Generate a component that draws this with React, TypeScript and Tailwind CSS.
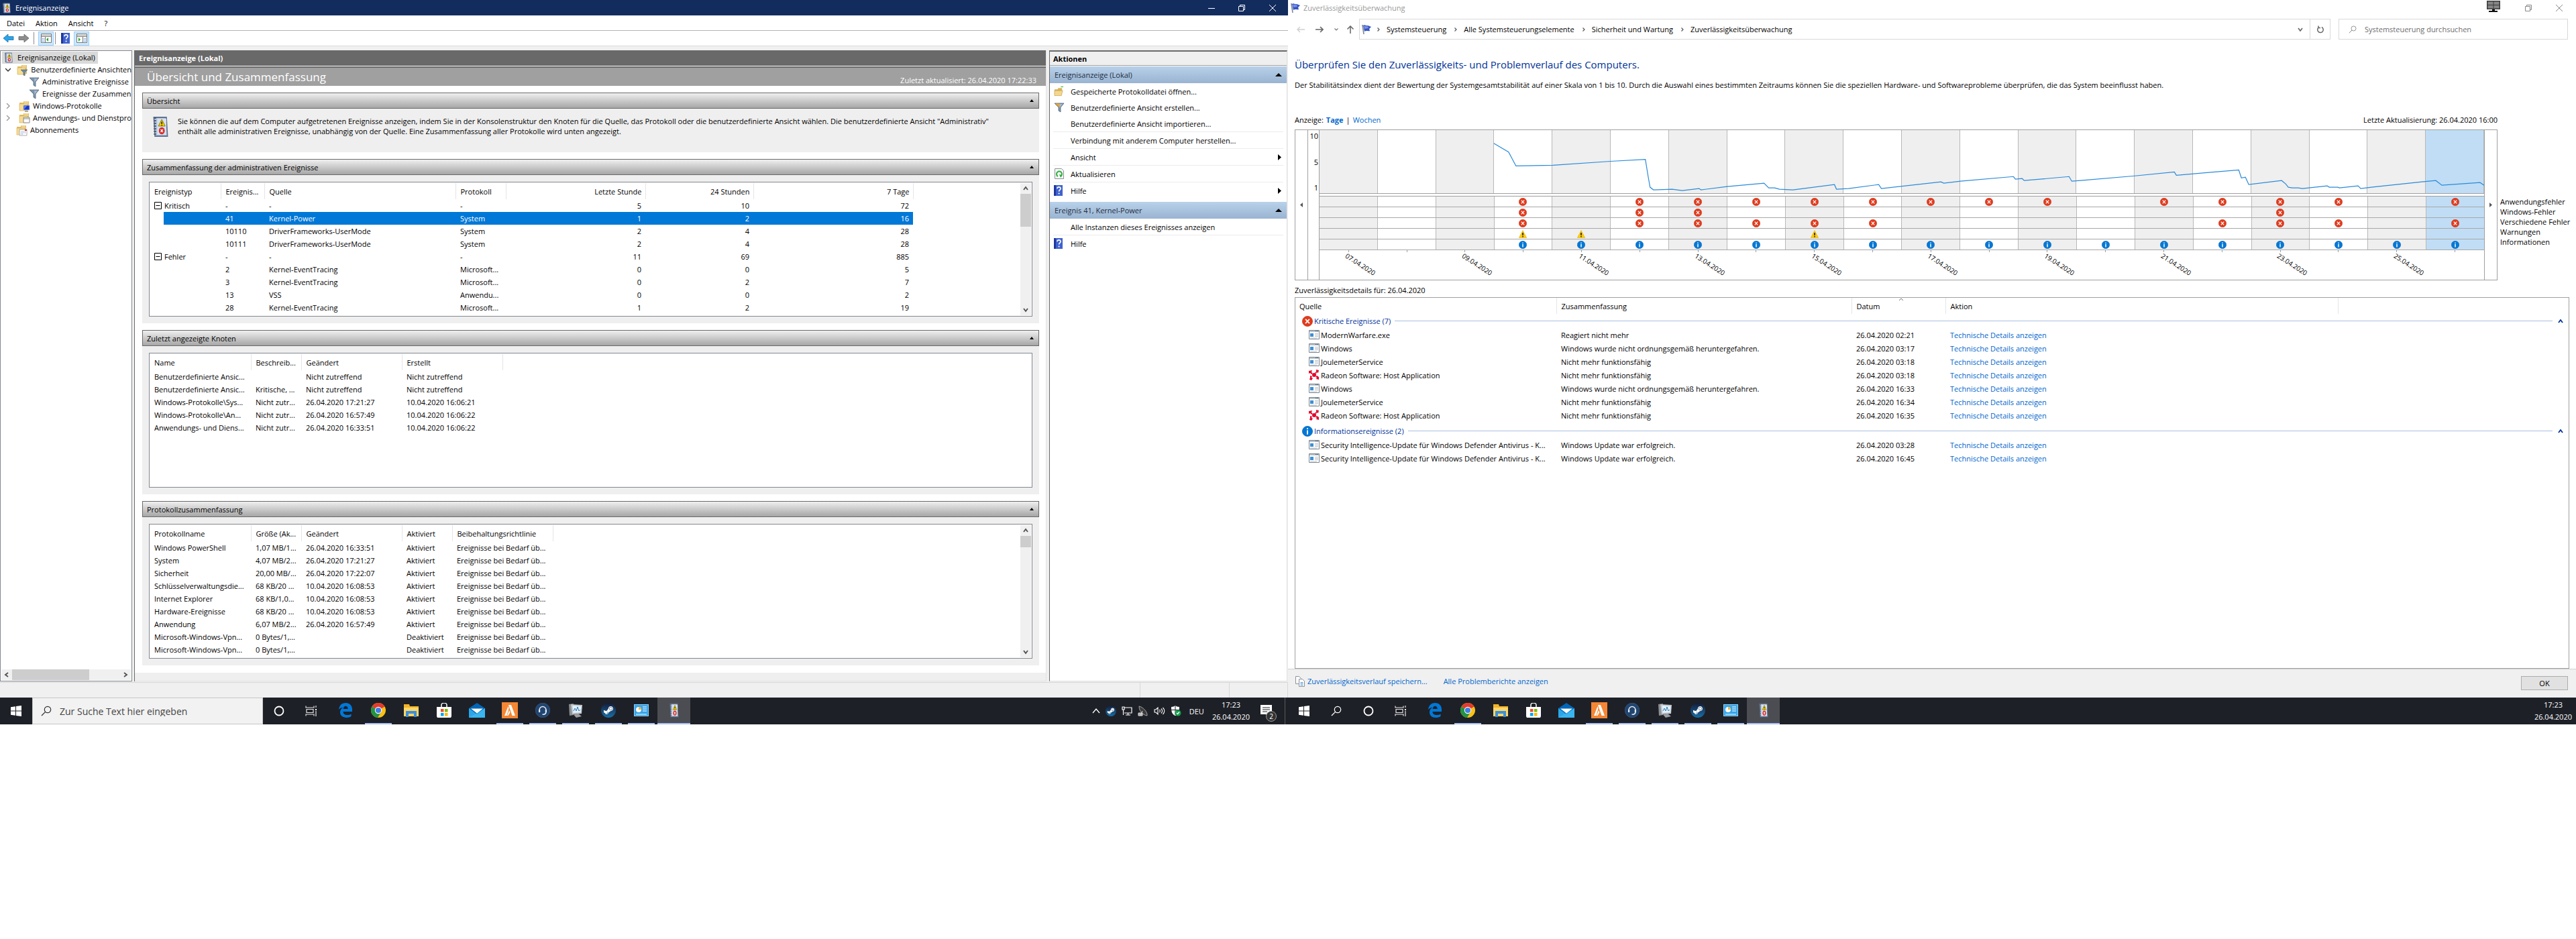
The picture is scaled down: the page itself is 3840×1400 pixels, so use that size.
import { useState } from 'react';
import type { ReactNode } from 'react';
import { FaSteamSymbol } from 'react-icons/fa';

type IconProps = { className?: string };

function EventIcon({ className = 'w-4 h-4' }: IconProps) {
  return (
    <svg viewBox="0 0 16 16" preserveAspectRatio="none" className={className}>
      <path d="M2 1h11l1 14H3z" fill="#b4c6df" stroke="#61738f" strokeWidth="1" />
      <path d="M5 2h8v12H5z" fill="#d5e1f0" />
      <path d="M3 1v14" stroke="#4f5b6e" strokeWidth="2" strokeDasharray="1 1" />
      <path d="M9 2.500l3 5H6z" fill="#f5d000" stroke="#8a7300" strokeWidth=".5" />
      <path d="M9 4.200v1.800M9 6.500v.6" stroke="#000" strokeWidth=".8" />
      <circle cx="9" cy="11" r="2.600" fill="#d92b2b" />
      <path d="M8 10l2 2M10 10l-2 2" stroke="#fff" strokeWidth=".8" />
    </svg>
  );
}

function FunnelIcon({ className = 'w-4 h-4', tint = '#7c95ad' }: IconProps & { tint?: string }) {
  return (
    <svg viewBox="0 0 16 16" className={className}>
      <path d="M1 2h14l-5 6v7l-3-2V8z" fill="#7c95ad" stroke="#4e6579" strokeWidth=".8" />
      <path d="M2 2.500h6v5.500z" fill={tint} />
      <path d="M8 3h5l-4 5v4" fill="#c6d6e4" opacity=".6" />
    </svg>
  );
}

function FolderIcon({ kind }: { kind: string }) {
  return (
    <svg viewBox="0 0 17 17" className="w-[17px] h-[17px] shrink-0">
      <path d="M1 3h6V1h8v13H1z" fill="#e3bd62" />
      <path d="M1 5h12v10H1z" fill="#f7dd92" stroke="#d3aa4c" strokeWidth=".6" />
      <path d="M8 2h6M8 4h6" stroke="#fff3cd" strokeWidth=".8" />
      {kind === 'filter' && <path d="M6 8h10l-4 4v5l-2-1v-4z" fill="#6f8ba5" stroke="#47617a" strokeWidth=".6" />}
      {kind === 'monitor' && (
        <g>
          <path d="M7 7h9v7H7z" fill="#1436c9" stroke="#c8c8c8" strokeWidth=".8" />
          <path d="M9 16h5" stroke="#777" strokeWidth="1.200" />
          <path d="M8 8l4 0-4 5z" fill="#5b80f0" />
        </g>
      )}
      {kind === 'window' && <path d="M7 7h9v8H7zM7 9h9" fill="#fff" stroke="#888" strokeWidth="1" />}
      {kind === 'calendar' && (
        <g>
          <path d="M5 7h11v9H5z" fill="#fff" stroke="#999" strokeWidth=".8" />
          <path d="M7 10h7M7 12h7M7 14h4" stroke="#6d8fc4" strokeDasharray="1 1" />
          <path d="M13 7h3v2h-3z" fill="#d33" />
        </g>
      )}
    </svg>
  );
}

function HelpIcon({ className = 'w-[13px] h-4' }: IconProps) {
  return (
    <svg viewBox="0 0 13 16" className={className}>
      <path d="M0 0h13v16H0z" fill="#3f62cf" />
      <path d="M0 0h3v16H0z" fill="#20389c" />
      <path d="M5 5.200c0-3 5-3 5 0 0 2-2.400 2-2.400 4.300" fill="none" stroke="#fff" strokeWidth="1.700" />
      <circle cx="7.600" cy="12.500" r="1.100" fill="#fff" />
    </svg>
  );
}

function FlagIcon() {
  return (
    <svg viewBox="0 0 16 16" className="w-4 h-4 shrink-0">
      <path d="M2 1l2 14" stroke="#7a8496" strokeWidth="1.600" />
      <path d="M3 2c3-2 4 1 7 0l5 2-3 3 1 3c-3 1-5-1-8 1z" fill="#3555c4" />
      <path d="M4 3c3-1 4 1 6 0l1 3-6 1z" fill="#7690e6" />
    </svg>
  );
}

function ErrorIcon({ className = 'w-3 h-3' }: IconProps) {
  return (
    <svg viewBox="0 0 12 12" className={className}>
      <circle cx="6" cy="6" r="5.700" fill="#e43a1c" stroke="#b92c12" strokeWidth=".5" />
      <path d="M3.800 3.600l4.400 4.800M8.200 3.600L3.800 8.400" stroke="#fff" strokeWidth="1.300" />
    </svg>
  );
}

function InfoIcon({ className = 'w-3 h-3' }: IconProps) {
  return (
    <svg viewBox="0 0 12 12" className={className}>
      <circle cx="6" cy="6" r="5.700" fill="#0078d7" stroke="#005ba8" strokeWidth=".5" />
      <path d="M6 2.400v1.400M6 4.800v4.800" stroke="#fff" strokeWidth="1.500" />
    </svg>
  );
}

function WarnIcon() {
  return (
    <svg viewBox="0 0 12 12" className="w-3 h-3">
      <path d="M6 .5l5.700 11H.3z" fill="#ffcc0a" stroke="#d9a400" strokeWidth=".5" />
      <path d="M6 4v4M6 9v1.500" stroke="#000" strokeWidth="1.400" />
    </svg>
  );
}

function AppIcon() {
  return (
    <svg viewBox="0 0 16 14" className="w-4 h-3.5 shrink-0">
      <path d="M.5 .5h15v13H.5z" fill="#fff" stroke="#7d8791" />
      <path d="M1 1h14v2H1z" fill="#b9c3cc" />
      <path d="M10 1.500h4" stroke="#4b5d6e" strokeDasharray="1 .6" />
      <path d="M2 5h5v5H2z" fill="#3f8fd4" />
      <path d="M9 5.500h5M9 7.500h5M9 9.500h5M2 12h10" stroke="#a9b4bd" strokeWidth=".8" />
    </svg>
  );
}

function RadeonIcon() {
  return (
    <svg viewBox="0 0 16 16" className="w-4 h-4 shrink-0" fill="#e2062c">
      <circle cx="8" cy="8" r="3" />
      <path d="M0 2l5-1-1 3 2 2-2 1-2-2-2 1zM11 0l4 1-1 4-2-1-1 2-2-1 2-2zM2 9l3 1-1 2 2 1-2 3-3-1 1-3zM12 9l3 2v4l-4-1 1-2-2-1z" />
    </svg>
  );
}

function WinLogo() {
  return (
    <svg viewBox="0 0 16 16" className="w-4 h-4" fill="#fff">
      <path d="M0 2.200l7-1v6.300H0zM8 1l8-1v7.500H8zM0 8.500h7v6.300l-7-1zM8 8.500h8V16l-8-1.100z" />
    </svg>
  );
}

function SearchGlyph({ className = 'w-4 h-4' }: IconProps) {
  return (
    <svg viewBox="0 0 16 16" className={className} fill="none" stroke="currentColor">
      <circle cx="10" cy="6" r="4.700" strokeWidth="1.200" />
      <path d="M6.600 9.400L1 15" strokeWidth="1.300" />
    </svg>
  );
}

function CortanaIcon() {
  return (
    <svg viewBox="0 0 16 16" className="w-4 h-4">
      <circle cx="8" cy="8" r="6.500" fill="none" stroke="#fff" strokeWidth="1.800" />
    </svg>
  );
}

function TaskViewIcon() {
  return (
    <svg viewBox="0 0 18 16" className="w-[18px] h-4" fill="none" stroke="#e4e4e4">
      <path d="M1 .5V3h12V.5M1 15.500V13h12v2.500M2 5.500h10v5H2zM16 0v3M16 13v3M16 8v5" strokeWidth="1.200" />
      <path d="M15 5h2v2h-2z" fill="#fff" stroke="none" />
    </svg>
  );
}

function EdgeIcon() {
  return (
    <svg viewBox="0 0 20 22" className="w-5 h-[22px]">
      <path d="M0 10C1 3 5 0 10.500 0 16 0 20 4 20 9.500V13H6.500c0 3.500 2.500 5 6 5 2.500 0 4.500-.7 6-1.600V20c-1.500 1.200-4 2-7 2C5.500 22 2 18.500 2 14c0-3.500 2-6 4.500-7.300C3.500 7 1.500 8 0 10zM6.700 9h7c0-2.600-1.200-4.200-3.400-4.200C8.200 4.800 7 6.500 6.700 9z" fill="#0078d7" />
    </svg>
  );
}

function ChromeIcon() {
  return (
    <svg viewBox="0 0 22 22" className="w-[22px] h-[22px]">
      <circle cx="11" cy="11" r="11" fill="#fbc116" />
      <path d="M11 11L1.500 5.500A11 11 0 0 1 20.500 5.500z" fill="#e33b2e" />
      <path d="M1.500 5.500A11 11 0 0 0 10 22l5.500-9L11 11z" fill="#229342" />
      <path d="M11 6h9.800l-.3-.6z" fill="#e33b2e" />
      <circle cx="11" cy="11" r="5.200" fill="#fff" />
      <circle cx="11" cy="11" r="4.100" fill="#3f7ee8" />
    </svg>
  );
}

function ExplorerIcon() {
  return (
    <svg viewBox="0 0 22 19" className="w-[22px] h-[19px]">
      <path d="M0 0h8l1 3h13v15H0z" fill="#f0b429" />
      <path d="M0 5h22v13H0z" fill="#fcd667" />
      <path d="M3 10h16v9h-4v-5H7v5H3z" fill="#3d8fdc" />
    </svg>
  );
}

function StoreIcon() {
  return (
    <svg viewBox="0 0 22 22" className="w-[22px] h-[22px]">
      <path d="M7 6V3a4 3 0 0 1 8 0v3" fill="none" stroke="#fff" strokeWidth="1.500" />
      <path d="M0 6h22v14l-1 2H1l-1-2z" fill="#fff" />
      <path d="M6 9h4.500v4.500H6z" fill="#f25022" />
      <path d="M12 9h4.500v4.500H12z" fill="#7fba00" />
      <path d="M6 15h4.500v4.500H6z" fill="#00a4ef" />
      <path d="M12 15h4.500v4.500H12z" fill="#ffb900" />
    </svg>
  );
}

function MailIcon() {
  return (
    <svg viewBox="0 0 24 22" className="w-6 h-[22px]">
      <path d="M0 8l12-8 12 8v14H0z" fill="#0067b8" />
      <path d="M0 8l12 9L24 8v14H0z" fill="#2aa7ea" />
      <path d="M0 22L24 8v14z" fill="#44c0f5" opacity=".6" />
      <path d="M3 8.500h18l-9 7z" fill="#fff" />
    </svg>
  );
}

function FiveMIcon() {
  return (
    <svg viewBox="0 0 24 24" className="w-6 h-6">
      <path d="M0 0h24v24H0z" fill="#f58634" />
      <path d="M10 4h4l6 16h-4.500L11.500 8.500zM9.500 6l1 3L7.500 20H4zM11 12l1.500 3-3 5H8z" fill="#fff" />
    </svg>
  );
}

function TeamSpeakIcon() {
  return (
    <svg viewBox="0 0 22 22" className="w-[22px] h-[22px]">
      <circle cx="11" cy="11" r="10.800" fill="#22456f" stroke="#3b6291" strokeWidth=".6" />
      <path d="M6 12V10.500a5 5 0 0 1 10 0V12" fill="none" stroke="#e5edf5" strokeWidth="1.400" />
      <path d="M5 10h2.200v4H5zM14.800 10H17v4h-2.200z" fill="#e5edf5" />
      <path d="M16 14c-.6 2.600-2.600 3.500-5.500 3" fill="none" stroke="#e5edf5" strokeWidth="1.500" />
    </svg>
  );
}

function PerfIcon() {
  return (
    <svg viewBox="0 0 24 22" className="w-6 h-[22px]">
      <path d="M2 2l7-1v17l-6 1z" fill="#8c9095" />
      <path d="M5 2l17 1-1 13-14 1z" fill="#c3c8cc" />
      <path d="M7.500 4l13 1-1 9-11 1z" fill="#e3f0fa" />
      <path d="M9 12l2-4 2 4 2-6 2 6 2-2" fill="none" stroke="#2d7dbb" strokeWidth="1" />
      <path d="M9 17.500l7-1.500 5 4-8 2z" fill="#9b9fa3" />
    </svg>
  );
}

function SteamIcon({ className = 'w-[22px] h-[22px] p-[3px]' }: IconProps) {
  return (
    <span className={`${className} flex items-center justify-center rounded-full bg-linear-to-b from-[#111d3a] to-[#1470a8]`}>
      <FaSteamSymbol className="w-full h-full text-white" />
    </span>
  );
}

function ControlPanelIcon() {
  return (
    <svg viewBox="0 0 22 18" className="w-[22px] h-[18px]">
      <path d="M0 0h22v18H0z" fill="#8fd0f5" />
      <path d="M1 1h20v16H1z" fill="#37a4e8" />
      <circle cx="7" cy="8" r="4" fill="#fff" />
      <path d="M7 8V4a4 4 0 0 1 4 4z" fill="#f7b733" />
      <path d="M13 4h6M13 7h6M13 10h6M3 15h16" stroke="#fff" strokeWidth="1.200" />
    </svg>
  );
}

const taskApps = [
  { name: 'Edge', icon: <EdgeIcon />, open: false },
  { name: 'Chrome', icon: <ChromeIcon />, open: true },
  { name: 'Explorer', icon: <ExplorerIcon />, open: false },
  { name: 'Store', icon: <StoreIcon />, open: false },
  { name: 'Mail', icon: <MailIcon />, open: false },
  { name: 'FiveM', icon: <FiveMIcon />, open: true },
  { name: 'TeamSpeak', icon: <TeamSpeakIcon />, open: true },
  { name: 'Leistung', icon: <PerfIcon />, open: true },
  { name: 'Steam', icon: <SteamIcon />, open: true },
  { name: 'Systemsteuerung', icon: <ControlPanelIcon />, open: true },
];

function TaskApps() {
  return (
    <div className="flex h-full ml-0.5">
      {taskApps.map((app) => (
        <button key={app.name} aria-label={app.name} className="w-[49px] h-full flex flex-col items-center">
          <span className="flex-1 flex items-center justify-center">{app.icon}</span>
          <span className={app.open ? 'w-10 h-0.5 bg-[#a9c0f5]' : 'w-10 h-0.5'} />
        </button>
      ))}
      <button aria-label="Ereignisanzeige" className="w-[49px] h-full flex flex-col items-center bg-[#4b4d52]">
        <span className="flex-1 flex items-center justify-center">
          <EventIcon className="w-4 h-[22px]" />
        </span>
        <span className="w-full h-0.5 bg-[#a9c0f5]" />
      </button>
    </div>
  );
}

function Clock() {
  return (
    <div className="text-[11px] leading-[18px] text-center text-white">
      <div>17:23</div>
      <div>26.04.2020</div>
    </div>
  );
}

function ScrollArrow({ dir }: { dir: 'up' | 'down' | 'left' | 'right' }) {
  const paths = {
    up: 'M1 6l3-4 3 4',
    down: 'M1 2l3 4 3-4',
    left: 'M6 1L2 4l4 3',
    right: 'M2 1l4 3-4 3',
  };
  return (
    <button aria-label={dir} className="w-4 h-4 flex items-center justify-center shrink-0">
      <svg viewBox="0 0 8 8" className="w-2 h-2" fill="none" stroke="#505050" strokeWidth="1.800">
        <path d={paths[dir]} />
      </svg>
    </button>
  );
}

function VScroll({ thumb }: { thumb: string }) {
  return (
    <div className="w-4 m-px flex flex-col bg-[#f0f0f0]">
      <ScrollArrow dir="up" />
      <div className={thumb} />
      <div className="flex-1" />
      <ScrollArrow dir="down" />
    </div>
  );
}

function Section({ title, children }: { title: string; children: ReactNode }) {
  const [open, setOpen] = useState(true);
  return (
    <section className="bg-[#efefef]">
      <button
        onClick={() => setOpen(!open)}
        className="w-full h-6 flex items-center justify-between pl-1.5 pr-[7px] border border-[#696969] bg-linear-to-b from-[#f0f0f0] to-[#a6a6a6]"
      >
        <span>{title}</span>
        <svg viewBox="0 0 6 4" className="w-1.5 h-1">
          <path d="M0 4l3-4 3 4z" />
        </svg>
      </button>
      {open && children}
    </section>
  );
}

function ListBox({ children, thumb }: { children: ReactNode; thumb?: string }) {
  return (
    <div className="p-2.5">
      <div className="h-[201px] flex border border-[#828790] bg-white overflow-hidden">
        <div className="flex-1 pt-px">{children}</div>
        {thumb && <VScroll thumb={thumb} />}
      </div>
    </div>
  );
}

type Column = { label: string; width: string; right?: boolean };

function HeadRow({ columns }: { columns: Column[] }) {
  return (
    <thead>
      <tr className="h-6">
        {columns.map((c) => (
          <th
            key={c.label}
            className={`${c.width} ${c.right ? 'text-right pr-[5px]' : 'text-left pl-[7px]'} font-normal border-r border-[#e5e5e5]`}
          >
            {c.label}
          </th>
        ))}
      </tr>
    </thead>
  );
}

const adminColumns: Column[] = [
  { label: 'Ereignistyp', width: 'w-[106px]' },
  { label: 'Ereignis...', width: 'w-[65px]' },
  { label: 'Quelle', width: 'w-[285px]' },
  { label: 'Protokoll', width: 'w-[75px]' },
  { label: 'Letzte Stunde', width: 'w-[208px]', right: true },
  { label: '24 Stunden', width: 'w-[161px]', right: true },
  { label: '7 Tage', width: 'w-[238px]', right: true },
];

const adminRows = [
  ['Kritisch', '-', '-', '-', '5', '10', '72'],
  ['', '41', 'Kernel-Power', 'System', '1', '2', '16'],
  ['', '10110', 'DriverFrameworks-UserMode', 'System', '2', '4', '28'],
  ['', '10111', 'DriverFrameworks-UserMode', 'System', '2', '4', '28'],
  ['Fehler', '-', '-', '-', '11', '69', '885'],
  ['', '2', 'Kernel-EventTracing', 'Microsoft...', '0', '0', '5'],
  ['', '3', 'Kernel-EventTracing', 'Microsoft...', '0', '2', '7'],
  ['', '13', 'VSS', 'Anwendu...', '0', '0', '2'],
  ['', '28', 'Kernel-EventTracing', 'Microsoft...', '1', '2', '19'],
];

function AdminTable() {
  const [selected, setSelected] = useState(1);
  return (
    <table className="table-fixed w-[1138px] whitespace-nowrap">
      <HeadRow columns={adminColumns} />
      <tbody>
        {adminRows.map((row, i) => {
          const bg = i === selected ? 'bg-[#0078d7] text-white' : '';
          return (
            <tr key={i} onClick={() => setSelected(i)} className="h-[19px]">
              <td className="p-0">
                {row[0] ? (
                  <span className="flex items-center gap-1 pl-[7px]">
                    <svg viewBox="0 0 11 11" className="w-[11px] h-[11px]" fill="#fff" stroke="#000">
                      <path d="M.5 .5h10v10H.5zM2.500 5.500h6" />
                    </svg>
                    {row[0]}
                  </span>
                ) : (
                  <span className={`${bg} block h-[19px] ml-[21px]`} />
                )}
              </td>
              {row.slice(1).map((cell, j) => (
                <td key={j} className={`${bg} p-0 ${j < 3 ? 'pl-[7px]' : 'text-right pr-1.5'}`}>
                  {cell}
                </td>
              ))}
            </tr>
          );
        })}
      </tbody>
    </table>
  );
}

function PlainTable({ columns, rows, width }: { columns: Column[]; rows: string[][]; width: string }) {
  return (
    <table className={`table-fixed ${width} whitespace-nowrap`}>
      <HeadRow columns={columns} />
      <tbody>
        {rows.map((row, i) => (
          <tr key={i} className="h-[19px]">
            {row.map((cell, j) => (
              <td key={j} className="p-0 pl-[7px]">
                {cell}
              </td>
            ))}
          </tr>
        ))}
      </tbody>
    </table>
  );
}

const nodeColumns: Column[] = [
  { label: 'Name', width: 'w-[151px]' },
  { label: 'Beschreib...', width: 'w-[75px]' },
  { label: 'Geändert', width: 'w-[150px]' },
  { label: 'Erstellt', width: 'w-[150px]' },
];

const nodeRows = [
  ['Benutzerdefinierte Ansic...', '', 'Nicht zutreffend', 'Nicht zutreffend'],
  ['Benutzerdefinierte Ansic...', 'Kritische, ...', 'Nicht zutreffend', 'Nicht zutreffend'],
  ['Windows-Protokolle\\Sys...', 'Nicht zutr...', '26.04.2020 17:21:27', '10.04.2020 16:06:21'],
  ['Windows-Protokolle\\An...', 'Nicht zutr...', '26.04.2020 16:57:49', '10.04.2020 16:06:22'],
  ['Anwendungs- und Diens...', 'Nicht zutr...', '26.04.2020 16:33:51', '10.04.2020 16:06:22'],
];

const logColumns: Column[] = [
  { label: 'Protokollname', width: 'w-[151px]' },
  { label: 'Größe (Ak...', width: 'w-[75px]' },
  { label: 'Geändert', width: 'w-[150px]' },
  { label: 'Aktiviert', width: 'w-[75px]' },
  { label: 'Beibehaltungsrichtlinie', width: 'w-[150px]' },
];

const logRows = [
  ['Windows PowerShell', '1,07 MB/1...', '26.04.2020 16:33:51', 'Aktiviert', 'Ereignisse bei Bedarf üb...'],
  ['System', '4,07 MB/2...', '26.04.2020 17:21:27', 'Aktiviert', 'Ereignisse bei Bedarf üb...'],
  ['Sicherheit', '20,00 MB/...', '26.04.2020 17:22:07', 'Aktiviert', 'Ereignisse bei Bedarf üb...'],
  ['Schlüsselverwaltungsdie...', '68 KB/20 ...', '10.04.2020 16:08:53', 'Aktiviert', 'Ereignisse bei Bedarf üb...'],
  ['Internet Explorer', '68 KB/1,0...', '10.04.2020 16:08:53', 'Aktiviert', 'Ereignisse bei Bedarf üb...'],
  ['Hardware-Ereignisse', '68 KB/20 ...', '10.04.2020 16:08:53', 'Aktiviert', 'Ereignisse bei Bedarf üb...'],
  ['Anwendung', '6,07 MB/2...', '26.04.2020 16:57:49', 'Aktiviert', 'Ereignisse bei Bedarf üb...'],
  ['Microsoft-Windows-Vpn...', '0 Bytes/1,...', '', 'Deaktiviert', 'Ereignisse bei Bedarf üb...'],
  ['Microsoft-Windows-Vpn...', '0 Bytes/1,...', '', 'Deaktiviert', 'Ereignisse bei Bedarf üb...'],
];

function TreeChevron({ open }: { open?: boolean }) {
  return (
    <svg viewBox="0 0 8 8" className="w-2 h-2 shrink-0" fill="none" stroke={open ? '#333' : '#999'} strokeWidth="1.400">
      <path d={open ? 'M0 2l4 4 4-4' : 'M2 0l4 4-4 4'} />
    </svg>
  );
}

function TreePanel() {
  return (
    <div className="w-[197px] flex flex-col border border-[#828790] bg-white overflow-hidden">
      <ul className="flex-1 pt-px leading-[18px] whitespace-nowrap">
        <li className="flex">
          <span className="flex items-center gap-1.5 h-[18px] ml-0.5 pl-[3px] pr-1 bg-[#d9d9d9]">
            <EventIcon className="w-[14px] h-4" />
            Ereignisanzeige (Lokal)
          </span>
        </li>
        <li className="flex items-center gap-1 h-[18px] pl-[7px]">
          <TreeChevron open />
          <span className="w-1" />
          <FolderIcon kind="filter" />
          Benutzerdefinierte Ansichten
        </li>
        <li className="flex items-center gap-1 h-[18px] pl-[42px]">
          <FunnelIcon className="w-4 h-4 shrink-0" />
          Administrative Ereignisse
        </li>
        <li className="flex items-center gap-1 h-[18px] pl-[42px]">
          <FunnelIcon className="w-4 h-4 shrink-0" />
          Ereignisse der Zusammen
        </li>
        <li className="flex items-center gap-1 h-[18px] pl-[7px]">
          <TreeChevron />
          <span className="w-1" />
          <FolderIcon kind="monitor" />
          Windows-Protokolle
        </li>
        <li className="flex items-center gap-1 h-[18px] pl-[7px]">
          <TreeChevron />
          <span className="w-1" />
          <FolderIcon kind="window" />
          Anwendungs- und Dienstpro
        </li>
        <li className="flex items-center gap-1 h-[18px] pl-[23px]">
          <FolderIcon kind="calendar" />
          Abonnements
        </li>
      </ul>
      <div className="h-4 m-px flex bg-[#f0f0f0]">
        <ScrollArrow dir="left" />
        <div className="w-[115px] bg-[#cdcdcd]" />
        <div className="flex-1" />
        <ScrollArrow dir="right" />
      </div>
    </div>
  );
}

function ActionHeader({ children }: { children: ReactNode }) {
  return (
    <button className="w-full h-[25px] flex items-center justify-between pl-[7px] pr-[7px] text-[#1e2c40] bg-linear-to-b from-[#b9d1ea] to-[#99b4d1]">
      <span>{children}</span>
      <svg viewBox="0 0 10 5" className="w-2.5 h-[5px]">
        <path d="M0 5l5-5 5 5z" fill="#000" />
      </svg>
    </button>
  );
}

function ActionItem({ icon, children, more, line }: { icon?: ReactNode; children: ReactNode; more?: boolean; line?: boolean }) {
  return (
    <li className={`mx-[5px] ${line ? 'border-b border-[#ececec]' : ''}`}>
      <button className="w-full h-6 flex items-center pr-[3px]">
        <span className="w-[26px] flex items-center pl-px">{icon}</span>
        <span className="flex-1 text-left">{children}</span>
        {more && (
          <svg viewBox="0 0 5 9" className="w-[5px] h-[9px]">
            <path d="M0 0l5 4.500L0 9z" />
          </svg>
        )}
      </button>
    </li>
  );
}

function ActionsPanel() {
  return (
    <div className="w-[355px] ml-1 border border-[#e0e0e0] border-l-[#696969] border-t-2 border-t-[#696969] bg-white">
      <h2 className="h-[21px] flex items-center pl-[5px] font-bold bg-[#efefef] border-b border-[#a0a0a0] mb-px">Aktionen</h2>
      <ActionHeader>Ereignisanzeige (Lokal)</ActionHeader>
      <ul className="mb-[5px]">
        <ActionItem
          icon={
            <svg viewBox="0 0 16 16" className="w-[15px] h-4">
              <path d="M1 5h5l1-2h6v4H1z" fill="#d9b45c" />
              <path d="M3 7h11l-2 8H1V7z" fill="#f4d78c" stroke="#b98f3a" strokeWidth=".6" />
              <path d="M11 1h4" stroke="#2fc22f" strokeWidth="1.200" />
            </svg>
          }
        >
          Gespeicherte Protokolldatei öffnen...
        </ActionItem>
        <ActionItem icon={<FunnelIcon className="w-4 h-4" tint="#f7a21b" />}>Benutzerdefinierte Ansicht erstellen...</ActionItem>
        <ActionItem line>Benutzerdefinierte Ansicht importieren...</ActionItem>
        <ActionItem line>Verbindung mit anderem Computer herstellen...</ActionItem>
        <ActionItem line more>
          Ansicht
        </ActionItem>
        <ActionItem
          line
          icon={
            <svg viewBox="0 0 15 16" className="w-[15px] h-4">
              <path d="M1.500 .5h10l3 3v12h-13z" fill="#fafafa" stroke="#8b9196" />
              <path d="M6 12a4 4 0 1 1 4 0" fill="none" stroke="#2fae3c" strokeWidth="2" />
              <path d="M8 9l4 1-2 4z" fill="#2fae3c" />
            </svg>
          }
        >
          Aktualisieren
        </ActionItem>
        <ActionItem more icon={<HelpIcon />}>
          Hilfe
        </ActionItem>
      </ul>
      <ActionHeader>Ereignis 41, Kernel-Power</ActionHeader>
      <ul>
        <ActionItem line>Alle Instanzen dieses Ereignisses anzeigen</ActionItem>
        <ActionItem icon={<HelpIcon />}>Hilfe</ActionItem>
      </ul>
    </div>
  );
}

function EventViewer() {
  return (
    <div className="flex-1 flex flex-col bg-[#f0f0f0]">
      <header className="h-[23px] flex items-center pl-[3px] bg-[#132c5e] text-white">
        <EventIcon className="w-[14px] h-4" />
        <h1 className="flex-1 pl-1.5 text-[11px]">Ereignisanzeige</h1>
        <button aria-label="Minimieren" className="w-[45px] flex justify-center">
          <svg viewBox="0 0 10 10" className="w-2.5 h-2.5" stroke="#fff">
            <path d="M0 5.500h10" />
          </svg>
        </button>
        <button aria-label="Verkleinern" className="w-[45px] flex justify-center">
          <svg viewBox="0 0 10 10" className="w-2.5 h-2.5" fill="none" stroke="#fff">
            <path d="M.5 2.500h7v7h-7zM2.500 2.500v-2h7v7h-2" />
          </svg>
        </button>
        <button aria-label="Schließen" className="w-[47px] flex justify-center">
          <svg viewBox="0 0 10 10" className="w-2.5 h-2.5" stroke="#fff">
            <path d="M0 0l10 10M10 0L0 10" />
          </svg>
        </button>
      </header>
      <nav className="h-[23px] flex items-center gap-4 pl-2.5 bg-white border-b border-[#b3b3b8]">
        <button>Datei</button>
        <button>Aktion</button>
        <button>Ansicht</button>
        <button>?</button>
      </nav>
      <div className="h-[23px] flex items-center pl-1 bg-white border-b border-[#d9d9d9]">
        <button aria-label="Zurück" className="mr-1.5">
          <svg viewBox="0 0 17 14" className="w-[17px] h-3.5">
            <path d="M1 7l7-6v3.500h8v5H8V13z" fill="#2aa5e8" stroke="#1a6ea8" strokeWidth=".8" />
          </svg>
        </button>
        <button aria-label="Vorwärts">
          <svg viewBox="0 0 17 14" className="w-[17px] h-3.5">
            <path d="M16 7L9 1v3.500H1v5h8V13z" fill="#8d8d8d" stroke="#666" strokeWidth=".8" />
          </svg>
        </button>
        <span className="w-px h-[18px] mx-1.5 bg-[#8d8d8d]" />
        <button aria-label="Konsolenstruktur" className="w-[23px] h-[21px] flex items-center justify-center bg-[#cce8ff] border border-[#99d1ff]">
          <svg viewBox="0 0 16 14" className="w-4 h-3.5">
            <path d="M.5 .5h15v13H.5zM.5 4.500h15M6.500 4.500v9" fill="#fff" stroke="#777" />
            <path d="M1 2.500h14" stroke="#999" />
            <path d="M2 7.500h3M2 9.500h3M2 11.500h3" stroke="#3a6fc4" strokeDasharray="1 1" />
            <path d="M11 6v6L8 9z" fill="#27a52c" />
          </svg>
        </button>
        <span className="w-px h-[18px] ml-0.5 mr-2 bg-[#8d8d8d]" />
        <button aria-label="Hilfe" className="mr-1.5">
          <HelpIcon />
        </button>
        <button aria-label="Aktionsbereich" className="w-[23px] h-[21px] flex items-center justify-center bg-[#cce8ff] border border-[#99d1ff]">
          <svg viewBox="0 0 16 14" className="w-4 h-3.5">
            <path d="M.5 .5h15v13H.5zM.5 4.500h15M9.500 4.500v9" fill="#fff" stroke="#777" />
            <path d="M1 2.500h14" stroke="#999" />
            <path d="M11 7.500h3M11 9.500h3M11 11.500h3" stroke="#3a6fc4" strokeDasharray="1 1" />
            <path d="M3 6v6l3-3z" fill="#27a52c" />
          </svg>
        </button>
      </div>
      <div className="flex-1 flex pt-1.5 pr-px pb-px">
        <TreePanel />
        <main className="flex-1 ml-[3px] flex flex-col border-l border-[#696969] border-r border-r-[#e3e3e3] bg-white">
          <h2 className="h-[23px] flex items-center pl-1.5 bg-[#696969] font-bold text-white">Ereignisanzeige (Lokal)</h2>
          <div className="h-[29px] mt-px mb-2.5 flex items-center justify-between pl-[18px] pr-3.5 bg-[#a0a0a0] border-t-2 border-[#696969] text-white">
            <h3 className="text-[17px]">Übersicht und Zusammenfassung</h3>
            <span className="pt-2.5">Zuletzt aktualisiert: 26.04.2020 17:22:33</span>
          </div>
          <div className="flex flex-col gap-2.5 pl-[11px] pr-2.5 pb-[11px]">
            <Section title="Übersicht">
              <div className="h-[65px] flex pl-3.5 pt-[11px] gap-3">
                <EventIcon className="w-[27px] h-8 shrink-0" />
                <p className="flex-1 leading-[15px]">
                  Sie können die auf dem Computer aufgetretenen Ereignisse anzeigen, indem Sie in der Konsolenstruktur den Knoten für die Quelle, das Protokoll oder die benutzerdefinierte Ansicht wählen. Die benutzerdefinierte Ansicht "Administrativ"
                  <br />
                  enthält alle administrativen Ereignisse, unabhängig von der Quelle. Eine Zusammenfassung aller Protokolle wird unten angezeigt.
                </p>
              </div>
            </Section>
            <Section title="Zusammenfassung der administrativen Ereignisse">
              <ListBox thumb="h-[49px] bg-[#cdcdcd]">
                <AdminTable />
              </ListBox>
            </Section>
            <Section title="Zuletzt angezeigte Knoten">
              <ListBox>
                <PlainTable columns={nodeColumns} rows={nodeRows} width="w-[526px]" />
              </ListBox>
            </Section>
            <Section title="Protokollzusammenfassung">
              <ListBox thumb="h-[17px] bg-[#cdcdcd]">
                <PlainTable columns={logColumns} rows={logRows} width="w-[601px]" />
              </ListBox>
            </Section>
          </div>
          <div className="h-[13px] bg-[#efefef] border-b border-[#e3e3e3]" />
        </main>
        <ActionsPanel />
      </div>
      <div className="h-[23px] flex justify-end border-t border-[#d7d7d7]">
        <span className="w-[133px] border-l border-[#d7d7d7]" />
        <span className="w-[88px] border-x border-[#d7d7d7]" />
      </div>
    </div>
  );
}

function LeftTaskbar() {
  return (
    <footer className="h-10 flex items-center bg-[#1e2027] text-white">
      <button aria-label="Start" className="w-12 h-full flex items-center justify-center">
        <WinLogo />
      </button>
      <label htmlFor="taskbar-search" className="w-[344px] h-full flex items-center gap-3 pl-3 bg-[#f2f2f2] border border-[#c6c6c6] text-[#333]">
        <SearchGlyph />
        <input
          id="taskbar-search"
          placeholder="Zur Suche Text hier eingeben"
          className="flex-1 text-[14px] bg-transparent outline-none placeholder:text-[#444]"
        />
      </label>
      <button aria-label="Cortana" className="w-12 flex justify-center">
        <CortanaIcon />
      </button>
      <button aria-label="Aktive Anwendungen" className="w-12 flex justify-center">
        <TaskViewIcon />
      </button>
      <TaskApps />
      <div className="flex-1" />
      <div className="flex items-center gap-2 mr-3">
        <svg viewBox="0 0 12 8" className="w-3 h-2" fill="none" stroke="#fff" strokeWidth="1.300">
          <path d="M1 7l5-6 5 6" />
        </svg>
        <SteamIcon className="w-4 h-4 p-0.5" />
        <svg viewBox="0 0 16 14" className="w-4 h-3.5" fill="none" stroke="#fff" strokeWidth="1.200">
          <path d="M4 2h11v8H4M9.500 10v3M6 13h7M1 1h3v4H1zM2.500 5v8" />
        </svg>
        <svg viewBox="0 0 16 16" className="w-4 h-4">
          <path d="M2 1c0 7 5 13 12 14C15 10 8 2 2 1z" fill="#3c3c3c" stroke="#bbb" strokeWidth=".8" />
          <path d="M7 8L4 15M1 11h6v4H1z" stroke="#ddd" fill="#aaa" />
        </svg>
        <svg viewBox="0 0 17 14" className="w-[17px] h-3.5" fill="none" stroke="#fff" strokeWidth="1.100">
          <path d="M1 5h2l3-3v10L3 9H1zM8.500 5c1 1 1 3 0 4M11 3.500c2 2 2 5 0 7M13.500 2c3 3 3 7 0 10" />
        </svg>
        <svg viewBox="0 0 16 16" className="w-4 h-4">
          <path d="M1 2c3 0 4-1 6-2 2 1 3 2 6 2 0 7-1 11-6 13C2 13 1 9 1 2z" fill="#fff" />
          <path d="M7 0v14M1 6.500h12" stroke="#1e2027" strokeWidth="1" />
          <circle cx="11" cy="11" r="4.500" fill="#12a04a" />
          <path d="M9 11l1.500 1.500L13 9.500" fill="none" stroke="#fff" strokeWidth="1.200" />
        </svg>
        <span className="pl-1">DEU</span>
      </div>
      <Clock />
      <button aria-label="Benachrichtigungen" className="relative w-12 h-full flex items-center justify-center">
        <svg viewBox="0 0 17 18" className="w-[17px] h-[18px]">
          <path d="M0 0h17v14h-5v4l-4-4H0z" fill="#fff" />
          <path d="M3 4h11M3 7h11M3 10h7" stroke="#1e2027" strokeWidth="1.200" />
        </svg>
        <span className="absolute right-2 bottom-1 w-4 h-4 rounded-full bg-[#333] border border-[#999] text-[10px] leading-[14px] text-center">2</span>
      </button>
      <span className="w-px h-full mr-1 ml-1 bg-[#5a5a5a]" />
    </footer>
  );
}

function RightTaskbar() {
  return (
    <footer className="h-10 flex items-center bg-[#1e2027] text-white">
      <button aria-label="Start" className="w-12 h-full flex items-center justify-center">
        <WinLogo />
      </button>
      <button aria-label="Suchen" className="w-12 flex justify-center">
        <SearchGlyph />
      </button>
      <button aria-label="Cortana" className="w-12 flex justify-center">
        <CortanaIcon />
      </button>
      <button aria-label="Aktive Anwendungen" className="w-12 flex justify-center">
        <TaskViewIcon />
      </button>
      <TaskApps />
      <div className="flex-1 flex justify-end pr-1.5">
        <Clock />
      </div>
    </footer>
  );
}

const days = Array.from({ length: 20 }, (_, i) => i);

const markers = [
  { icon: <ErrorIcon />, days: [3, 5, 6, 7, 8, 9, 10, 11, 12, 14, 15, 16, 17, 19] },
  { icon: <ErrorIcon />, days: [3, 5, 6, 16] },
  { icon: <ErrorIcon />, days: [3, 5, 6, 7, 8, 9, 15, 16, 17, 19] },
  { icon: <WarnIcon />, days: [3, 4, 8] },
  { icon: <InfoIcon />, days: [3, 4, 5, 6, 7, 8, 9, 10, 11, 12, 13, 14, 15, 16, 17, 18, 19] },
];

const stability =
  '260,20 282,33 293,54 348,53 434,47 486,44 490,69 493,86 498,90 526,89 541,91 566,88 569,90 608,85 663,80 670,87 679,87 686,89 706,90 768,82 771,89 789,88 834,82 838,88 927,78 931,80 956,77 1035,70 1038,74 1048,73 1051,76 1118,70 1122,77 1135,76 1216,69 1275,63 1278,68 1371,60 1375,72 1381,71 1386,82 1435,76 1441,81 1445,86 1451,87 1460,87 1466,88 1503,84 1506,86 1519,86 1521,87 1549,84 1553,88 1569,86 1644,78 1665,76 1674,83 1731,79 1737,83';

function dayClass(i: number) {
  if (i === 19) return 'bg-[#c0ddf5]';
  return i % 2 === 0 ? 'bg-[#efefef]' : 'bg-white';
}

function StabilityChart() {
  return (
    <div className="flex">
      <div className="flex-1 flex border border-[#a0a0a0]">
        <button aria-label="Früher" className="w-[19px] flex items-center justify-center border-r border-[#a0a0a0]">
          <svg viewBox="0 0 4 7" className="w-1 h-[7px]">
            <path d="M4 0v7L0 3.500z" fill="#555" />
          </svg>
        </button>
        <div className="w-4 flex flex-col justify-between h-[94px] text-right pr-px pt-px pb-0 leading-4">
          <span>10</span>
          <span>5</span>
          <span>1</span>
        </div>
        <div className="flex-1 border-x border-[#a0a0a0]">
          <div className="relative flex h-[95px] border-b border-[#a0a0a0]">
            {days.map((i) => (
              <div key={i} className={`flex-1 border-r border-[#b8b8b8] last:border-r-0 ${dayClass(i)}`} />
            ))}
            <svg viewBox="0 0 1737 95" preserveAspectRatio="none" className="absolute inset-0 w-full h-full">
              <polyline points={stability} fill="none" stroke="#2a8ad8" strokeWidth="1.200" vectorEffect="non-scaling-stroke" />
            </svg>
          </div>
          <div className="h-[3px]" />
          <div className="border-t border-[#a0a0a0]">
            {markers.map((row, r) => (
              <div key={r} className="flex h-4 border-b border-[#a8a8a8]">
                {days.map((i) => (
                  <div key={i} className={`flex-1 flex items-center justify-center border-r border-[#b8b8b8] last:border-r-0 ${dayClass(i)}`}>
                    {row.days.includes(i) && row.icon}
                  </div>
                ))}
              </div>
            ))}
          </div>
          <div className="flex h-11">
            {days.map((i) => (
              <div key={i} className="relative flex-1">
                <span className="block mx-auto w-px h-[3px] bg-[#a0a0a0]" />
                {i % 2 === 0 && (
                  <span className="absolute left-1/2 top-0.5 origin-top-left rotate-[33deg] text-[10px] leading-3">
                    {String(7 + i).padStart(2, '0')}.04.2020
                  </span>
                )}
              </div>
            ))}
          </div>
        </div>
        <button aria-label="Später" className="w-[18px] flex items-center justify-center">
          <svg viewBox="0 0 4 7" className="w-1 h-[7px]">
            <path d="M0 0v7l4-3.500z" fill="#555" />
          </svg>
        </button>
      </div>
      <ul className="w-[107px] pl-1 pt-[100px] leading-[15px] whitespace-nowrap">
        <li>Anwendungsfehler</li>
        <li>Windows-Fehler</li>
        <li>Verschiedene Fehler</li>
        <li>Warnungen</li>
        <li>Informationen</li>
      </ul>
    </div>
  );
}

const critical = [
  { name: 'ModernWarfare.exe', text: 'Reagiert nicht mehr', date: '26.04.2020 02:21' },
  { name: 'Windows', text: 'Windows wurde nicht ordnungsgemäß heruntergefahren.', date: '26.04.2020 03:17' },
  { name: 'JoulemeterService', text: 'Nicht mehr funktionsfähig', date: '26.04.2020 03:18' },
  { name: 'Radeon Software: Host Application', text: 'Nicht mehr funktionsfähig', date: '26.04.2020 03:18', radeon: true },
  { name: 'Windows', text: 'Windows wurde nicht ordnungsgemäß heruntergefahren.', date: '26.04.2020 16:33' },
  { name: 'JoulemeterService', text: 'Nicht mehr funktionsfähig', date: '26.04.2020 16:34' },
  { name: 'Radeon Software: Host Application', text: 'Nicht mehr funktionsfähig', date: '26.04.2020 16:35', radeon: true },
];

const infos = [
  { name: 'Security Intelligence-Update für Windows Defender Antivirus - K...', text: 'Windows Update war erfolgreich.', date: '26.04.2020 03:28' },
  { name: 'Security Intelligence-Update für Windows Defender Antivirus - K...', text: 'Windows Update war erfolgreich.', date: '26.04.2020 16:45' },
];

type Detail = { name: string; text: string; date: string; radeon?: boolean };

function DetailGroup({ icon, title, rows }: { icon: ReactNode; title: string; rows: Detail[] }) {
  return (
    <tbody>
      <tr className="h-[21px]">
        <th colSpan={5} className="p-0 font-normal text-[#003399]">
          <div className="flex items-center pl-2.5 pr-2">
            {icon}
            <span className="pl-0.5 pr-1.5">{title}</span>
            <span className="flex-1 h-px bg-[#aabfe0]" />
            <svg viewBox="0 0 8 6" className="w-2 h-1.5 ml-2" fill="none" stroke="#003399" strokeWidth="1.800">
              <path d="M1 5l3-4 3 4" />
            </svg>
          </div>
        </th>
      </tr>
      {rows.map((row) => (
        <tr key={row.date + row.name} className="h-5">
          <td className="p-0">
            <div className="flex items-center gap-0.5 pl-5">
              {row.radeon ? <RadeonIcon /> : <AppIcon />}
              {row.name}
            </div>
          </td>
          <td className="p-0 pl-[7px]">{row.text}</td>
          <td className="p-0 pl-[7px]">{row.date}</td>
          <td className="p-0 pl-[7px]">
            <a href="#details" className="text-[#0066cc]">
              Technische Details anzeigen
            </a>
          </td>
          <td />
        </tr>
      ))}
      <tr className="h-[3px]" />
    </tbody>
  );
}

function Crumb({ children }: { children: ReactNode }) {
  return (
    <li className="flex items-center gap-2.5">
      <svg viewBox="0 0 4 6" className="w-1 h-1.5" fill="none" stroke="#555" strokeWidth="1.200">
        <path d="M.5 .5L3 3 .5 5.500" />
      </svg>
      <a href="#crumb">{children}</a>
    </li>
  );
}

function ReliabilityMonitor() {
  const [view, setView] = useState('Tage');
  return (
    <div className="flex-1 flex flex-col bg-white">
      <header className="h-[23px] flex items-center pl-[3px] text-[#999]">
        <FlagIcon />
        <h1 className="flex-1 pl-1 text-[11px]">Zuverlässigkeitsüberwachung</h1>
        <svg viewBox="0 0 20 17" className="w-5 h-[17px] mr-8 mb-1">
          <path d="M0 0h20v13H0z" fill="#3b3b3b" />
          <path d="M1.500 1.500h8v4.500h-8zM10.500 1.500h8v4.500h-8zM1.500 7h8v4.500h-8zM10.500 7h8v4.500h-8z" fill="#858585" />
          <path d="M8 13h4v2h4v2H3v-2h5z" fill="#111" />
        </svg>
        <button aria-label="Verkleinern" className="w-5 flex justify-center">
          <svg viewBox="0 0 10 10" className="w-2.5 h-2.5" fill="none" stroke="#888">
            <path d="M.5 2.500h7v7h-7zM2.500 2.500v-2h7v7h-2" />
          </svg>
        </button>
        <button aria-label="Schließen" className="w-5 flex justify-center ml-[26px] mr-[15px]">
          <svg viewBox="0 0 10 10" className="w-2.5 h-2.5" stroke="#888">
            <path d="M0 0l10 10M10 0L0 10" />
          </svg>
        </button>
      </header>
      <div className="h-[31px] mt-[5px] flex items-center pl-[13px] pr-3">
        <div className="w-[93px] flex items-center gap-4">
          <button aria-label="Zurück">
            <svg viewBox="0 0 12 10" className="w-3 h-2.5" fill="none" stroke="#d0d0d0" strokeWidth="1.400">
              <path d="M12 5H1M5 1L1 5l4 4" />
            </svg>
          </button>
          <button aria-label="Vorwärts">
            <svg viewBox="0 0 12 10" className="w-3 h-2.5" fill="none" stroke="#666" strokeWidth="1.600">
              <path d="M0 5h11M7 1l4 4-4 4" />
            </svg>
          </button>
          <svg viewBox="0 0 6 4" className="w-1.5 h-1" fill="none" stroke="#777" strokeWidth="1.200">
            <path d="M.5 .5L3 3 5.500 .5" />
          </svg>
          <button aria-label="Nach oben" className="-ml-1">
            <svg viewBox="0 0 12 12" className="w-3 h-3" fill="none" stroke="#666" strokeWidth="1.500">
              <path d="M6 12V1M1.500 5.500L6 1l4.500 4.500" />
            </svg>
          </button>
        </div>
        <nav className="flex-1 h-full flex items-center pl-0.5 border border-[#d9d9d9]">
          <FlagIcon />
          <ol className="flex-1 flex gap-3 pl-2">
            <Crumb>Systemsteuerung</Crumb>
            <Crumb>Alle Systemsteuerungselemente</Crumb>
            <Crumb>Sicherheit und Wartung</Crumb>
            <Crumb>Zuverlässigkeitsüberwachung</Crumb>
          </ol>
          <button aria-label="Verlauf" className="w-7 flex justify-center">
            <svg viewBox="0 0 8 6" className="w-2 h-1.5" fill="none" stroke="#666" strokeWidth="1.600">
              <path d="M1 1l3 4 3-4" />
            </svg>
          </button>
          <button aria-label="Neu laden" className="w-[30px] h-full flex items-center justify-center border-l border-[#d9d9d9]">
            <svg viewBox="0 0 12 12" className="w-3 h-3" fill="none" stroke="#666" strokeWidth="1.500">
              <path d="M8 2.500a4.300 4.300 0 1 1-4.500 .3M3 .5v3h3" />
            </svg>
          </button>
        </nav>
        <label htmlFor="panel-search" className="w-[342px] h-full ml-3 flex items-center gap-3 pl-3.5 border border-[#d9d9d9] text-[#888]">
          <SearchGlyph className="w-3 h-3" />
          <input id="panel-search" placeholder="Systemsteuerung durchsuchen" className="flex-1 outline-none placeholder:text-[#6d6d6d]" />
        </label>
      </div>
      <main className="flex-1 flex flex-col pl-2.5 pr-2.5 pt-[27px]">
        <h2 className="text-[15px] leading-5 text-[#003399]">Überprüfen Sie den Zuverlässigkeits- und Problemverlauf des Computers.</h2>
        <p className="mt-[13px] leading-4">
          Der Stabilitätsindex dient der Bewertung der Systemgesamtstabilität auf einer Skala von 1 bis 10. Durch die Auswahl eines bestimmten Zeitraums können Sie die speziellen Hardware- und Softwareprobleme überprüfen, die das System beeinflusst haben.
        </p>
        <div className="mt-9 mb-1.5 flex justify-between leading-4 mr-[107px]">
          <div className="flex gap-1">
            <span>Anzeige:</span>
            <button onClick={() => setView('Tage')} className={view === 'Tage' ? 'font-bold text-[#0066cc]' : 'text-[#0066cc]'}>
              Tage
            </button>
            <span>|</span>
            <button onClick={() => setView('Wochen')} className={view === 'Wochen' ? 'font-bold text-[#0066cc]' : 'text-[#0066cc]'}>
              Wochen
            </button>
          </div>
          <span>Letzte Aktualisierung: 26.04.2020 16:00</span>
        </div>
        <StabilityChart />
        <h3 className="mt-[7px] mb-0.5 leading-4">Zuverlässigkeitsdetails für: 26.04.2020</h3>
        <div className="flex-1 border border-[#a0a0a0]">
          <table className="table-fixed w-full whitespace-nowrap text-left">
            <thead>
              <tr className="h-6">
                <th className="w-[389px] pl-1.5 font-normal border-r border-[#e5e5e5]">Quelle</th>
                <th className="w-[440px] pl-[7px] font-normal border-r border-[#e5e5e5]">Zusammenfassung</th>
                <th className="relative w-[140px] pl-[7px] font-normal border-r border-[#e5e5e5]">
                  Datum
                  <svg viewBox="0 0 8 5" className="absolute top-0 left-1/2 w-2 h-[5px]" fill="none" stroke="#777">
                    <path d="M1 4l3-3 3 3" />
                  </svg>
                </th>
                <th className="w-[585px] pl-[7px] font-normal border-r border-[#e5e5e5]">Aktion</th>
                <th />
              </tr>
            </thead>
            <DetailGroup icon={<ErrorIcon className="w-4 h-4" />} title="Kritische Ereignisse (7)" rows={critical} />
            <DetailGroup icon={<InfoIcon className="w-4 h-4" />} title="Informationsereignisse (2)" rows={infos} />
          </table>
        </div>
      </main>
      <div className="h-[43px] flex items-start pt-2.5 pl-[11px] pr-3 bg-[#f0f0f0] border-t border-[#d0d0d0]">
        <svg viewBox="0 0 14 16" className="w-3.5 h-4 mr-1" fill="#fff" stroke="#8b9298">
          <path d="M.5 .5h5l3 3v8h-8z" />
          <path d="M5.500 4.500h5l3 3v8h-8z" />
          <path d="M7.500 9.500h4M7.500 11.500h4M7.500 13.500h4" stroke="#4d8fd0" />
        </svg>
        <a href="#save" className="text-[#0066cc] mr-6">
          Zuverlässigkeitsverlauf speichern...
        </a>
        <a href="#reports" className="text-[#0066cc]">
          Alle Problemberichte anzeigen
        </a>
        <button className="ml-auto w-[70px] h-[21px] border border-[#adadad] bg-[#e1e1e1]">OK</button>
      </div>
    </div>
  );
}

export default function App() {
  return (
    <div className="min-h-screen bg-white font-['Open_Sans',sans-serif] text-[11px] leading-[15px] text-black">
      <div className="grid grid-cols-2">
        <div className="flex flex-col">
          <EventViewer />
          <LeftTaskbar />
        </div>
        <div className="flex flex-col">
          <ReliabilityMonitor />
          <RightTaskbar />
        </div>
      </div>
    </div>
  );
}
